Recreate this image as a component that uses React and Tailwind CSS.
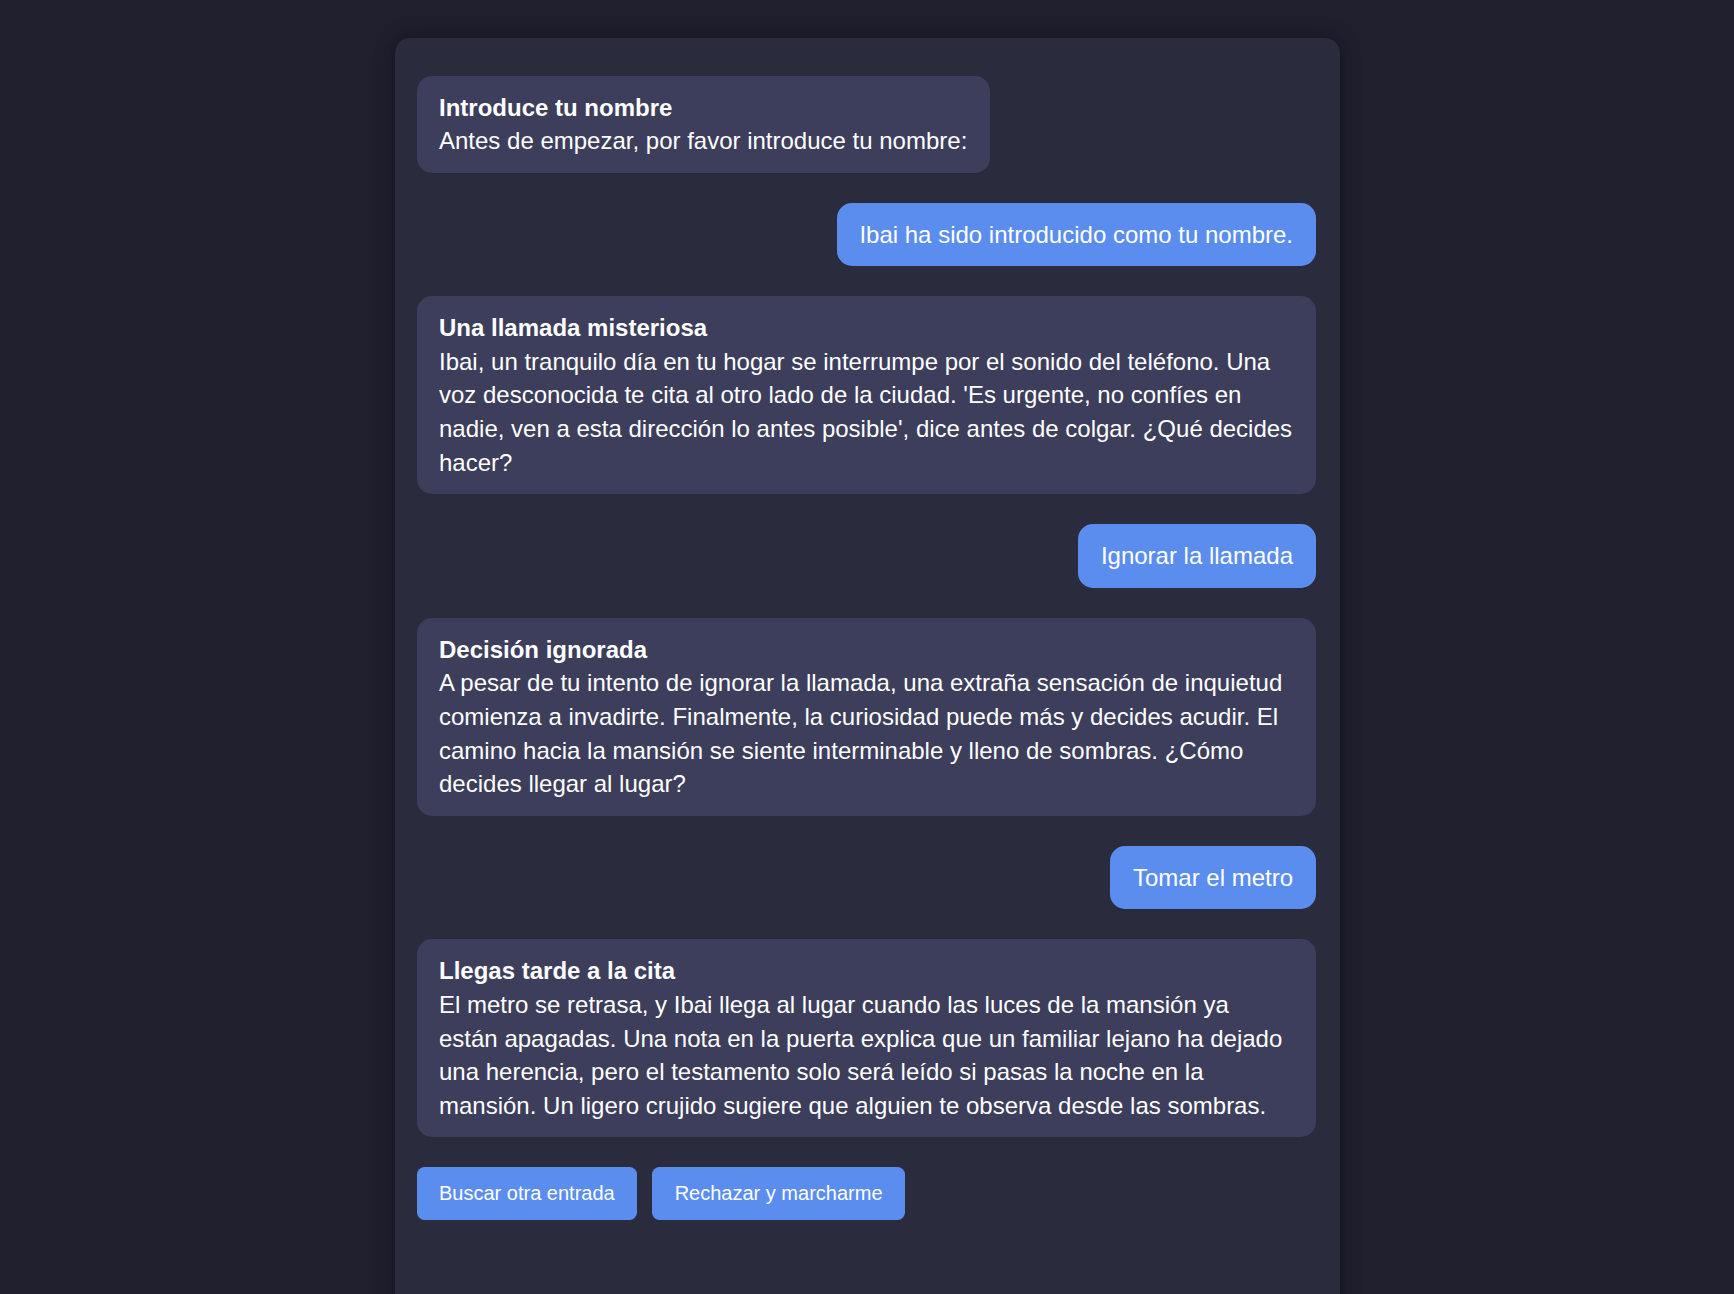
import React from 'react';

const historia = [
    { tipo: 'bot', titulo: 'Introduce tu nombre', texto: 'Antes de empezar, por favor introduce tu nombre:' },
    { tipo: 'user', texto: 'Ibai ha sido introducido como tu nombre.' },
    {
        tipo: 'bot',
        titulo: 'Una llamada misteriosa',
        texto: "Ibai, un tranquilo día en tu hogar se interrumpe por el sonido del teléfono. Una voz desconocida te cita al otro lado de la ciudad. 'Es urgente, no confíes en nadie, ven a esta dirección lo antes posible', dice antes de colgar. ¿Qué decides hacer?",
    },
    { tipo: 'user', texto: 'Ignorar la llamada' },
    {
        tipo: 'bot',
        titulo: 'Decisión ignorada',
        texto: 'A pesar de tu intento de ignorar la llamada, una extraña sensación de inquietud comienza a invadirte. Finalmente, la curiosidad puede más y decides acudir. El camino hacia la mansión se siente interminable y lleno de sombras. ¿Cómo decides llegar al lugar?',
    },
    { tipo: 'user', texto: 'Tomar el metro' },
    {
        tipo: 'bot',
        titulo: 'Llegas tarde a la cita',
        texto: 'El metro se retrasa, y Ibai llega al lugar cuando las luces de la mansión ya están apagadas. Una nota en la puerta explica que un familiar lejano ha dejado una herencia, pero el testamento solo será leído si pasas la noche en la mansión. Un ligero crujido sugiere que alguien te observa desde las sombras.',
    },
];

const opciones = ['Buscar otra entrada', 'Rechazar y marcharme'];

const App = () => {
    return (
        <div className="min-h-screen bg-[#1f1f2e] pt-[38px] font-['Liberation_Sans',Arial,sans-serif] text-white overflow-hidden">
            <div className="mx-auto w-[945px] min-h-[1300px] rounded-[15px] bg-[#2a2b3d] pl-[22px] pr-[24px] pt-[37.5px] pb-[22.5px] shadow-[0_0_20px_rgba(0,0,0,0.35)]">
                <div className="flex flex-col gap-[30px]">
                    {historia.map((msg, i) =>
                        msg.tipo === 'bot' ? (
                            <div
                                key={i}
                                className="self-start rounded-[15px] bg-[#3d3d5c] px-[22.5px] py-[15px] text-[24px] leading-[33.6px]"
                            >
                                <strong className="block font-bold">{msg.titulo}</strong>
                                <p>{msg.texto}</p>
                            </div>
                        ) : (
                            <div
                                key={i}
                                className="self-end rounded-[15px] bg-[#5b8def] px-[22.5px] py-[15px] text-[24px] leading-[33.6px]"
                            >
                                {msg.texto}
                            </div>
                        )
                    )}

                    {/* OPCIONES */}
                    <div className="flex gap-[15px]">
                        {opciones.map((op) => (
                            <button
                                key={op}
                                className="rounded-[7.5px] bg-[#5b8def] px-[22.5px] py-[15px] text-[20px] leading-[23px] text-white"
                            >
                                {op}
                            </button>
                        ))}
                    </div>
                </div>
            </div>
        </div>
    );
};

export default App;
